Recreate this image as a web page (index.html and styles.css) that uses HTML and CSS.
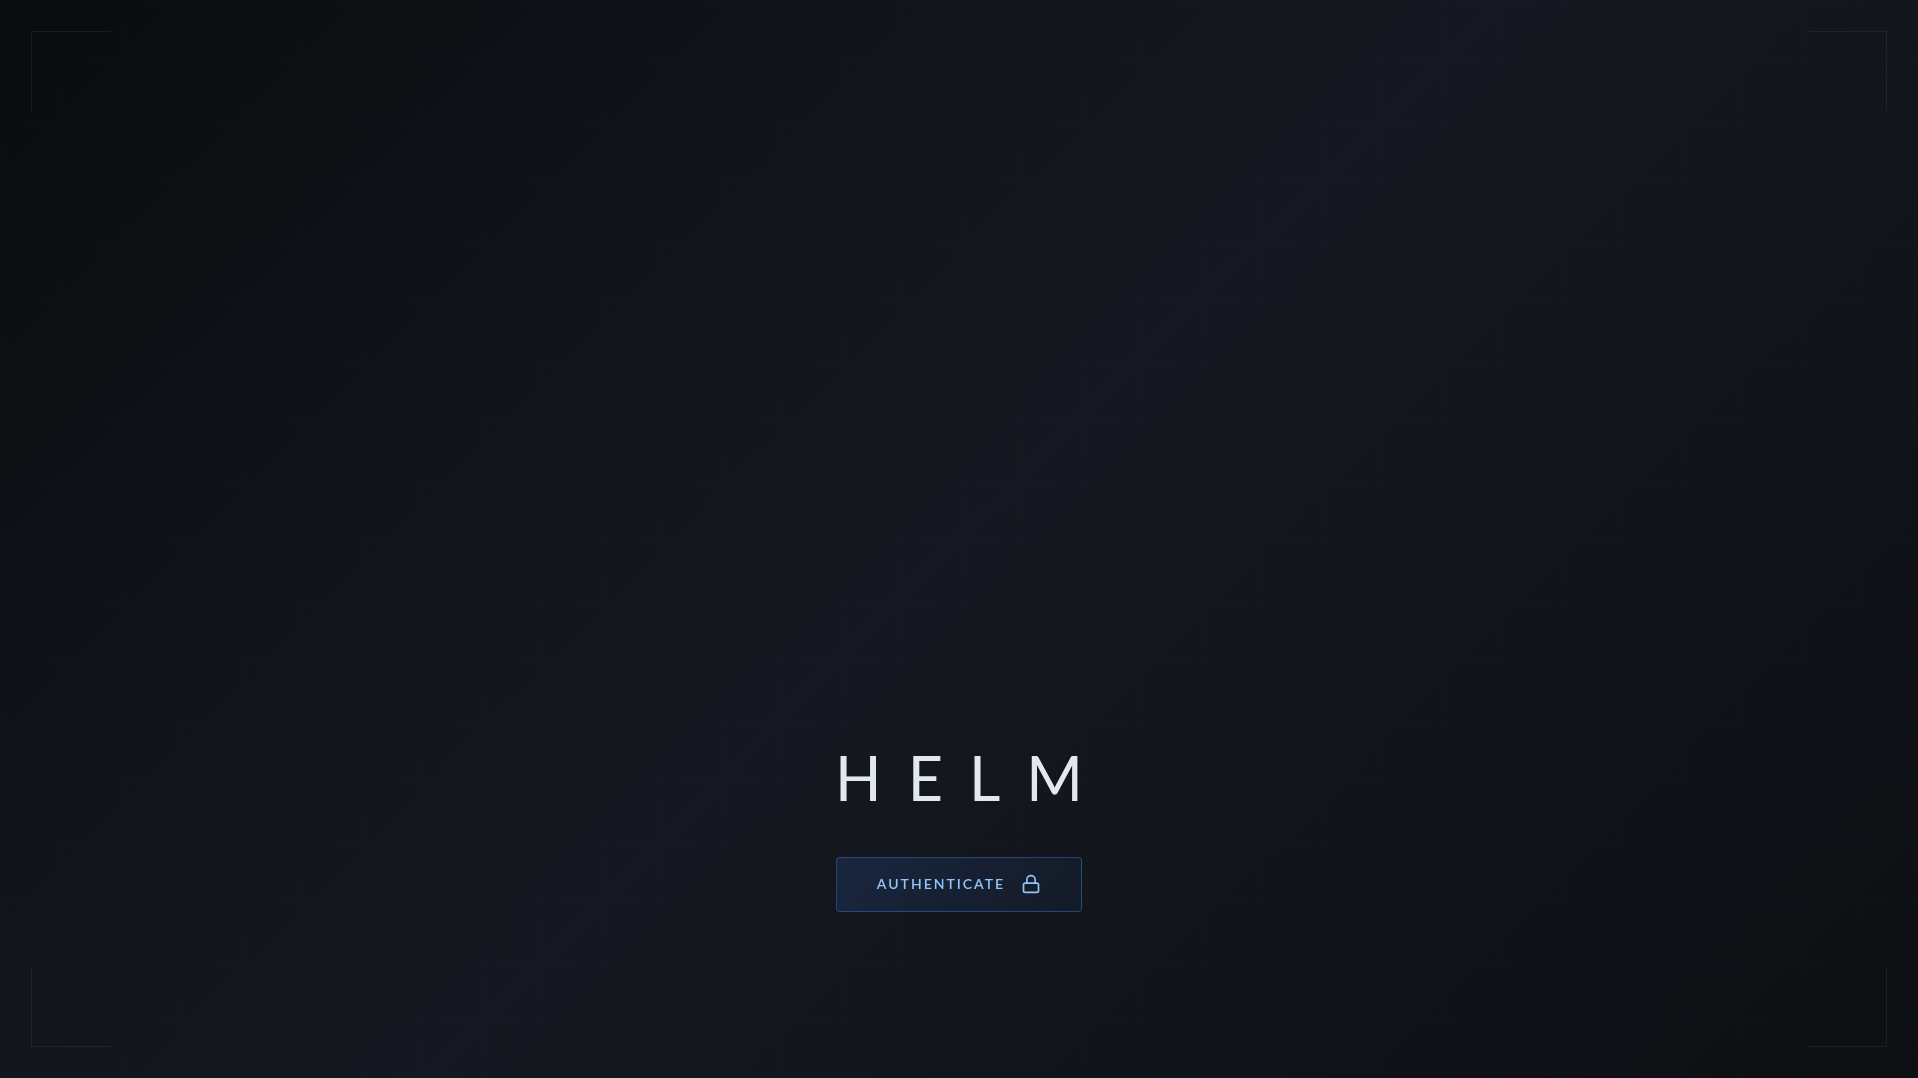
FILE: index.html
```html
<!DOCTYPE html>
<html lang="en">
<head>
    <meta charset="UTF-8">
    <meta name="viewport" content="width=device-width, initial-scale=1.0">
    <title>HELM</title>
    <link rel="stylesheet" href="styles.css">
</head>
<body>
<div class="grid"></div>
<div class="corner corner-tl"></div>
<div class="corner corner-tr"></div>
<div class="corner corner-bl"></div>
<div class="corner corner-br"></div>
<main class="landing">
    <h1 class="title">HELM</h1>
    <button type="button" class="auth-btn">
        <span>Authenticate</span>
        <svg class="lock" viewBox="0 0 24 24" aria-hidden="true">
            <rect x="3" y="11" width="18" height="11" rx="2"/>
            <path d="M7 11V7a5 5 0 0 1 10 0v4"/>
        </svg>
    </button>
</main>
</body>
</html>
```
FILE: styles.css
```css
* {
    margin: 0;
    padding: 0;
    box-sizing: border-box;
}

body {
    min-height: 100vh;
    overflow: hidden;
    background: linear-gradient(135deg, #0a0b0e 0%, #11141a 30%, #151820 50%, #11141a 72%, #0e0f13 100%);
    font-family: Lato, "Liberation Sans", sans-serif;
    color: #e2e8f0;
}

/* faint 60px grid over the whole window */
.grid {
    position: fixed;
    inset: 1px;
    background-image:
        linear-gradient(rgba(59, 130, 246, 0.02) 1px, transparent 1px),
        linear-gradient(90deg, rgba(59, 130, 246, 0.02) 1px, transparent 1px);
    background-size: 60px 60px;
}

.corner {
    position: fixed;
    width: 80px;
    height: 80px;
    border: 0 solid rgba(59, 130, 246, 0.15);
}

.corner-tl {
    top: 31px;
    left: 31px;
    border-width: 1px 0 0 1px;
}

.corner-tr {
    top: 31px;
    right: 31px;
    border-width: 1px 1px 0 0;
}

.corner-bl {
    bottom: 31px;
    left: 31px;
    border-width: 0 0 1px 1px;
}

.corner-br {
    bottom: 31px;
    right: 31px;
    border-width: 0 1px 1px 0;
}

.landing {
    position: relative;
    min-height: 100vh;
    padding-bottom: 166px;
    display: flex;
    flex-direction: column;
    align-items: center;
    justify-content: flex-end;
    gap: 39px;
}

.title {
    font-size: 61px;
    font-weight: 400;
    line-height: 80px;
    letter-spacing: 26px;
    margin-right: -26px;
}

.auth-btn {
    display: flex;
    align-items: center;
    gap: 16px;
    height: 55px;
    padding: 0 40px 2px;
    border: 1px solid rgba(59, 130, 246, 0.4);
    border-radius: 4px;
    background: linear-gradient(135deg, rgba(59, 130, 246, 0.15), rgba(59, 130, 246, 0.05));
    color: #93c5fd;
    font: inherit;
    font-size: 14px;
    font-weight: 600;
    line-height: 18px;
    letter-spacing: 2px;
    text-transform: uppercase;
    cursor: pointer;
}

.lock {
    width: 20px;
    height: 20px;
    fill: none;
    stroke: currentColor;
    stroke-width: 2;
    stroke-linecap: round;
    stroke-linejoin: round;
}
```
